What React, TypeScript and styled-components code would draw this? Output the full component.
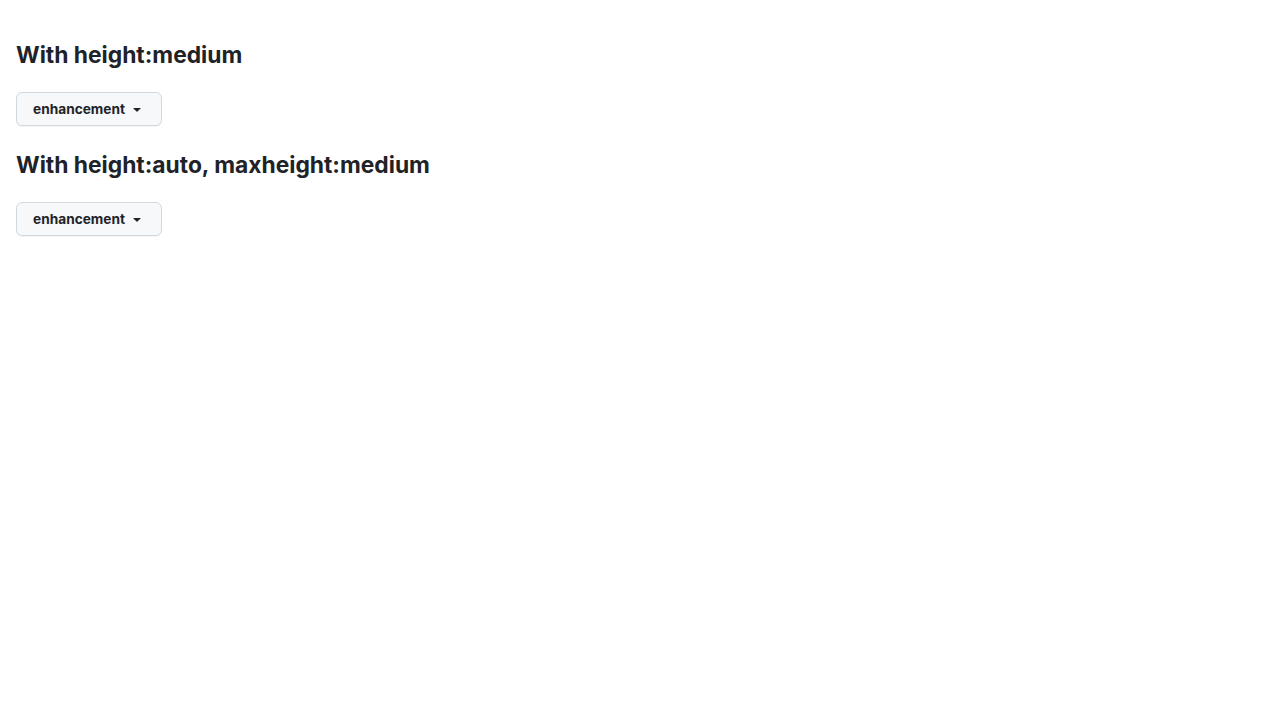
import styled, { createGlobalStyle } from "styled-components";

const GlobalStyle = createGlobalStyle`
  body {
    margin: 0;
    background: #ffffff;
    color: #1f2328;
    font-family: Inter, "Noto Sans", "Liberation Sans", sans-serif;
  }
`;

const Page = styled.div`
  padding: 16px;
`;

const Section = styled.section`
  display: flex;
  flex-direction: column;
  align-items: flex-start;
`;

const Heading = styled.h2`
  margin: 24px 0 22px 0;
  font-size: 22.8px;
  line-height: 30px;
  font-weight: 700;
  color: #1f2328;
`;

const Trigger = styled.button`
  display: inline-flex;
  align-items: center;
  gap: 4px;
  height: 34px;
  padding: 0 16px;
  border: 1px solid #d1d9e0;
  border-radius: 6px;
  background: #f6f8fa;
  color: #1f2328;
  font-family: Inter, "Noto Sans", "Liberation Sans", sans-serif;
  font-size: 13.7px;
  font-weight: 700;
  cursor: pointer;
  box-shadow: 0 1px 0 rgba(31, 35, 40, 0.04);
`;

const Caret = () => (
  <svg width="16" height="16" viewBox="0 0 16 16" fill="#1f2328">
    <path d="m4.427 7.427 3.396 3.396a.25.25 0 0 0 .354 0l3.396-3.396A.25.25 0 0 0 11.396 7H4.604a.25.25 0 0 0-.177.427Z" />
  </svg>
);

const sections = ["With height:medium", "With height:auto, maxheight:medium"];

export default function App() {
  return (
    <>
      <GlobalStyle />
      <Page>
        {sections.map((title) => (
          <Section key={title}>
            <Heading>{title}</Heading>
            <Trigger>
              enhancement
              <Caret />
            </Trigger>
          </Section>
        ))}
      </Page>
    </>
  );
}
